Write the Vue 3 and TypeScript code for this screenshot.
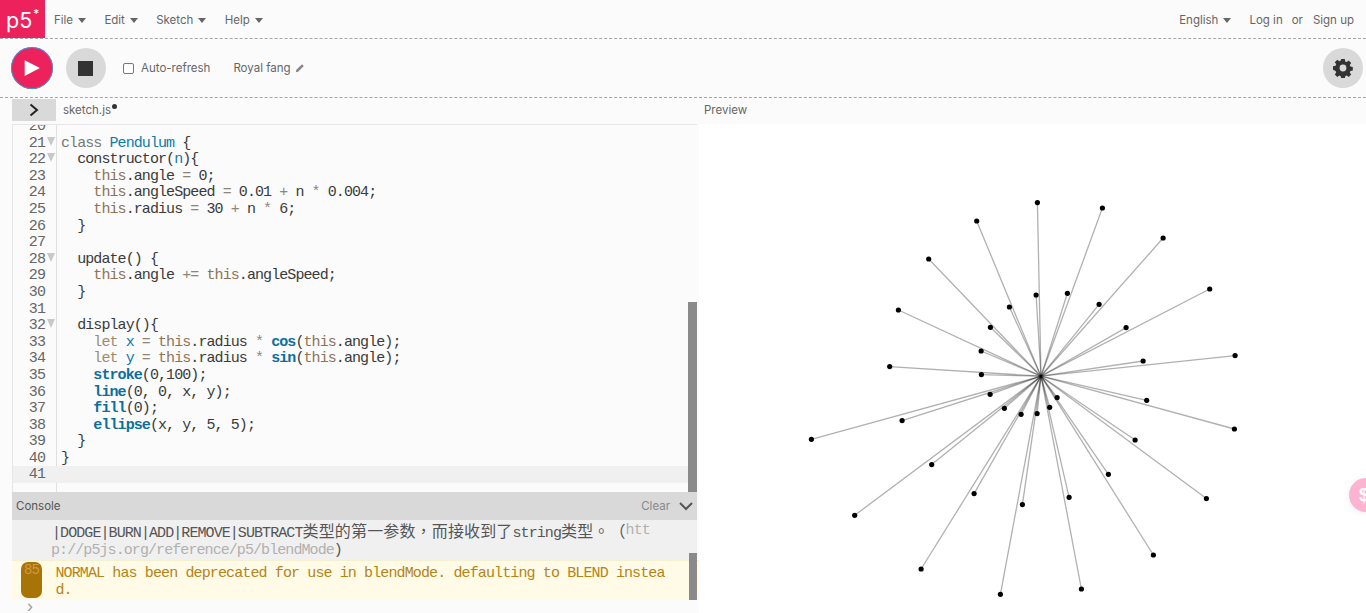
<script setup lang="ts">
type Tok = [string, string]
const lines: { n: number; fold?: boolean; active?: boolean; toks: Tok[] }[] = [
  { n: 20, toks: [] },
  { n: 21, fold: true, toks: [['kw', 'class '], ['def', 'Pendulum'], ['', ' {']] },
  { n: 22, fold: true, toks: [['', '  constructor('], ['def', 'n'], ['', '){']] },
  { n: 23, toks: [['', '    '], ['th', 'this'], ['', '.angle '], ['op', '='], ['', ' 0;']] },
  { n: 24, toks: [['', '    '], ['th', 'this'], ['', '.angleSpeed '], ['op', '='], ['', ' 0.01 '], ['op', '+'], ['', ' n '], ['op', '*'], ['', ' 0.004;']] },
  { n: 25, toks: [['', '    '], ['th', 'this'], ['', '.radius '], ['op', '='], ['', ' 30 '], ['op', '+'], ['', ' n '], ['op', '*'], ['', ' 6;']] },
  { n: 26, toks: [['', '  }']] },
  { n: 27, toks: [] },
  { n: 28, fold: true, toks: [['', '  update() {']] },
  { n: 29, toks: [['', '    '], ['th', 'this'], ['', '.angle '], ['op', '+='], ['', ' '], ['th', 'this'], ['', '.angleSpeed;']] },
  { n: 30, toks: [['', '  }']] },
  { n: 31, toks: [] },
  { n: 32, fold: true, toks: [['', '  display(){']] },
  { n: 33, toks: [['', '    '], ['lt', 'let '], ['def', 'x'], ['op', ' = '], ['th', 'this'], ['', '.radius '], ['op', '*'], ['', ' '], ['fn', 'cos'], ['', '('], ['th', 'this'], ['', '.angle);']] },
  { n: 34, toks: [['', '    '], ['lt', 'let '], ['def', 'y'], ['op', ' = '], ['th', 'this'], ['', '.radius '], ['op', '*'], ['', ' '], ['fn', 'sin'], ['', '('], ['th', 'this'], ['', '.angle);']] },
  { n: 35, toks: [['', '    '], ['fn', 'stroke'], ['', '(0,100);']] },
  { n: 36, toks: [['', '    '], ['fn', 'line'], ['', '(0, 0, x, y);']] },
  { n: 37, toks: [['', '    '], ['fn', 'fill'], ['', '(0);']] },
  { n: 38, toks: [['', '    '], ['fn', 'ellipse'], ['', '(x, y, 5, 5);']] },
  { n: 39, toks: [['', '  }']] },
  { n: 40, toks: [['', '}']] },
  { n: 41, active: true, toks: [] },
]
const cx = 342
const cy = 252.2
const pts: [number, number][] = [
  [1037, 202.3], [1102, 207.7], [976.3, 220.7], [1162.7, 237.7], [928.3, 258.7], [1209.3, 288.7],
  [898, 309.7], [1035.7, 294.7], [1067, 293], [1009, 306.7], [1098.7, 304], [990, 327],
  [1125.7, 327.3], [980.7, 350.7], [1234.7, 355.3], [1142.7, 360.7], [889.3, 366.3], [981, 374.3],
  [811, 439], [989.7, 394], [901.7, 420.3], [1004, 408], [1020.7, 414], [1036.7, 413.3],
  [1049.3, 407], [1056.7, 397.3], [1146.3, 400], [1234, 428.7], [1134.7, 439.7], [931.3, 464.3],
  [854.3, 515], [1108, 474], [973.7, 493.3], [1206, 498.3], [1022, 504.3], [1068.7, 497],
  [1153, 554.7], [920.7, 568.7], [1081, 588.7], [1000, 594],
].map(([x, y]) => [x - 698.6, y - 123.7] as [number, number])
</script>

<template>
  <div class="page">
    <nav class="nav">
      <div class="logo">p5<span class="star">*</span></div>
      <div class="menu">
        <span class="item">File<i class="caret"></i></span>
        <span class="item">Edit<i class="caret"></i></span>
        <span class="item">Sketch<i class="caret"></i></span>
        <span class="item">Help<i class="caret"></i></span>
      </div>
      <div class="right">
        <span class="item">English<i class="caret"></i></span>
        <span class="login">Log in</span>
        <span class="or">or</span>
        <span class="signup">Sign up</span>
      </div>
    </nav>

    <header class="toolbar">
      <button class="play" aria-label="Play">
        <svg width="18" height="18" viewBox="0 0 16 16"><path d="M1.5 1 L15 8 L1.5 15 Z" fill="#fff" /></svg>
      </button>
      <button class="stop" aria-label="Stop"><span class="square"></span></button>
      <label class="refresh"><span class="check"></span>Auto-refresh</label>
      <span class="name">Royal fang
        <svg width="10" height="10" viewBox="0 0 12 12"><path d="M1 11 L1.6 8.2 L8.4 1.4 L10.6 3.6 L3.8 10.4 Z" fill="#888" /></svg>
      </span>
      <button class="gear" aria-label="Settings">
        <svg width="20" height="20" viewBox="0 0 20 20">
          <path fill="#333" fill-rule="evenodd" d="M8.2 1h3.6l.4 2.4 1.5.6 2-1.4 2.5 2.5-1.4 2 .6 1.5 2.4.4v3.6l-2.4.4-.6 1.5 1.4 2-2.5 2.5-2-1.4-1.5.6-.4 2.4H8.2l-.4-2.4-1.5-.6-2 1.4-2.5-2.5 1.4-2-.6-1.5L0 11.8V8.2l2.6-.4.6-1.5-1.4-2 2.5-2.5 2 1.4 1.5-.6zM10 6.6a3.4 3.4 0 1 0 0 6.8 3.4 3.4 0 0 0 0-6.8z" />
        </svg>
      </button>
    </header>

    <main class="work">
      <section class="left">
        <div class="tabs">
          <button class="toggle" aria-label="Open sidebar">
            <svg width="12" height="14" viewBox="0 0 12 14"><path d="M2.5 1.5 L9 7 L2.5 12.5" fill="none" stroke="#222" stroke-width="2" /></svg>
          </button>
          <span class="file">sketch.js</span><span class="dot"></span>
        </div>
        <div class="editor">
          <div class="code">
            <div v-for="l in lines" :key="l.n" class="line" :class="{ active: l.active }">
              <span class="num">{{ l.n }}</span>
              <span class="foldcell"><i v-if="l.fold" class="fold"></i></span>
              <span class="txt"><span v-for="(t, i) in l.toks" :key="i" :class="t[0]">{{ t[1] }}</span></span>
            </div>
          </div>
          <div class="track"><div class="thumb"></div></div>
        </div>
        <div class="chead">
          <span class="ctitle">Console</span>
          <span class="clear">Clear</span>
          <svg width="14" height="9" viewBox="0 0 14 9"><path d="M1 1 L7 7 L13 1" fill="none" stroke="#555" stroke-width="2" /></svg>
        </div>
        <div class="cbody">
          <div class="cmsgs">
            <div class="msg">
              <div class="m1">|DODGE|BURN|ADD|REMOVE|SUBTRACT<span class="cjk">类型的第一参数，而接收到了</span>string<span class="cjk">类型。（</span><span class="link sup">htt</span></div>
              <div class="m2"><span class="link">p://p5js.org/reference/p5/blendMode</span>)</div>
            </div>
            <div class="warn">
              <span class="badge">85</span>
              <div class="wtext">NORMAL has been deprecated for use in blendMode. defaulting to BLEND instea<br />d.</div>
            </div>
          </div>
          <div class="ctrack"><div class="cthumb"></div></div>
        </div>
        <div class="prompt">›</div>
      </section>

      <section class="right-pane">
        <div class="plabel">Preview</div>
        <svg class="canvas" width="667" height="489" viewBox="0 0 667 489">
          <line v-for="(p, i) in pts" :key="'l' + i" :x1="cx" :y1="cy" :x2="p[0]" :y2="p[1]" stroke="rgba(0,0,0,0.31)" stroke-width="1.3" />
          <circle v-for="(p, i) in pts" :key="'c' + i" :cx="p[0]" :cy="p[1]" r="2.6" fill="#000" />
        </svg>
      </section>
    </main>

    <div class="floater"><span>$</span></div>
  </div>
</template>

<style>
html, body { margin: 0; background: #fbfbfb; overflow: hidden; }
</style>

<style scoped>
.page { width: 1366px; height: 613px; position: relative; overflow: hidden; background: #fbfbfb; font-family: Inter, "Noto Sans", sans-serif; color: #666; font-size: 11.5px; }
.nav { height: 38px; display: flex; align-items: center; border-bottom: 1px dashed #a6a6a6; padding-right: 12px; }
.logo { width: 45px; height: 38px; background: #ed225d; color: #fff; font-size: 21.5px; display: flex; box-sizing: border-box; padding: 7px 0 0 6px; line-height: 26px; flex: none; }
.star { font-size: 12px; line-height: 14px; margin-left: 1px; }
.menu { display: flex; gap: 18.3px; margin-left: 9px; padding-top: 1px; }
.item { display: inline-flex; align-items: center; }
.caret { width: 0; height: 0; border-left: 4.5px solid transparent; border-right: 4.5px solid transparent; border-top: 5px solid #666; margin-left: 5px; margin-top: 1px; }
.right { margin-left: auto; display: flex; align-items: center; padding-top: 1px; }
.login { margin-left: 18px; }
.or { margin-left: 9px; }
.signup { margin-left: 10px; }
.toolbar { height: 58px; display: flex; align-items: center; border-bottom: 1px dashed #a6a6a6; padding: 0 3px 0 11px; }
button { border: 0; padding: 0; display: flex; align-items: center; justify-content: center; }
.play { width: 42px; height: 42px; border-radius: 50%; background: #ed225d; box-shadow: 0 0 0 1px #3a9ad9 inset; }
.stop { width: 40px; height: 40px; border-radius: 50%; background: #d9d9d9; margin-left: 13px; }
.square { width: 15px; height: 15px; background: #333; margin-left: -2px; }
.refresh { display: flex; align-items: center; margin-left: 17px; }
.check { width: 9px; height: 9px; border: 1px solid #777; border-radius: 2px; background: #fff; margin-right: 7px; }
.name { margin-left: 23px; display: inline-flex; align-items: center; gap: 4px; }
.gear { width: 40px; height: 40px; border-radius: 50%; background: #d9d9d9; margin-left: auto; }
.work { display: grid; grid-template-columns: 699px 667px; height: 515px; }
.left { padding-left: 12px; display: flex; flex-direction: column; min-width: 0; }
.tabs { height: 26px; display: flex; align-items: center; box-sizing: border-box; padding-bottom: 2px; }
.toggle { width: 44px; height: 22px; background: #d9d9d9; }
.file { margin-left: 7px; }
.dot { width: 5px; height: 5px; border-radius: 50%; background: #333; margin: -7px 0 0 1px; }
.editor { height: 368px; width: 685px; position: relative; border-top: 1px solid #e6e6e6; overflow: hidden; box-sizing: border-box; display: flex; }
.code { flex: 1; min-width: 0; margin-top: -7px; border-left: 1px solid #e6e6e6; background: linear-gradient(to right, transparent 43px, #e0e0e0 43px, #e0e0e0 44px, transparent 44px); }
.line { display: flex; height: 16.6px; line-height: 18.4px; font-family: "Liberation Mono", monospace; font-size: 15px; letter-spacing: -0.92px; color: #3a3a3a; white-space: pre; }
.line.active { background-color: #f0f0f0; }
.num { width: 32px; text-align: right; color: #666; }
.foldcell { width: 12px; display: flex; align-items: flex-start; justify-content: center; padding-top: 2px; box-sizing: border-box; }
.fold { width: 0; height: 0; border-left: 4.5px solid transparent; border-right: 4.5px solid transparent; border-top: 9px solid #c8c8c8; }
.txt { margin-left: 4px; }
.kw { color: #777; }
.lt { color: #a08a70; }
.def { color: #0b7ca9; }
.th { color: #8f7355; }
.op { color: #8f8577; }
.fn { color: #0b6f9e; font-weight: 700; }
.track { width: 9px; position: relative; }
.thumb { position: absolute; left: 0; right: 0; top: 177px; bottom: 0; background: #8a8a8a; }
.chead { height: 28px; width: 685px; background: #d9d9d9; display: flex; align-items: center; padding: 0 4px; box-sizing: border-box; }
.ctitle { color: #555; }
.clear { margin-left: auto; margin-right: 9px; color: #888; }
.cbody { height: 80px; width: 685px; display: flex; position: relative; background: #f0f0f0; }
.cmsgs { flex: 1; min-width: 0; }
.msg { height: 40px; font-family: "Liberation Mono", monospace; font-size: 15px; letter-spacing: -0.92px; color: #555; padding-left: 39px; white-space: nowrap; }
.cjk { font-family: "Noto Sans CJK TC", sans-serif; font-size: 16px; letter-spacing: 0.15px; text-spacing-trim: space-all; }
.m1 { height: 21px; line-height: 21px; padding-left: 1px; }
.m2 { height: 19px; line-height: 19px; }
.link { color: #b0b0b0; }
.sup { vertical-align: 3px; }
.warn { height: 40px; background: #fffbe6; color: #b58318; display: flex; box-sizing: border-box; border-top: 1px solid #f5f0d0; font-family: "Liberation Mono", monospace; font-size: 15px; letter-spacing: -0.88px; margin-right: -10px; }
.badge { width: 21px; height: 36px; margin: 1px 0 0 9px; border-radius: 7px; background: #a87408; color: #d19a40; font-size: 14px; text-align: center; line-height: 17px; flex: none; }
.wtext { margin-left: 13.5px; line-height: 17px; padding-top: 4px; white-space: nowrap; }
.ctrack { width: 8px; position: relative; z-index: 1; }
.cthumb { position: absolute; left: 0; right: 0; top: 33px; bottom: 0; background: #8a8a8a; }
.prompt { padding-left: 15px; color: #999; font-size: 16px; line-height: 13px; }
.right-pane { display: flex; flex-direction: column; }
.plabel { height: 26px; line-height: 25px; padding-left: 5px; color: #666; }
.canvas { background: #fff; display: block; }
.floater { position: absolute; left: 1349px; top: 478px; width: 34px; height: 34px; border-radius: 50%; background: #fdb4d2; box-shadow: 0 1px 6px rgba(0,0,0,.08); color: #fff; font: 700 18px/34px "Liberation Sans", sans-serif; }
.floater span { display: block; width: 20px; text-align: right; }
</style>
